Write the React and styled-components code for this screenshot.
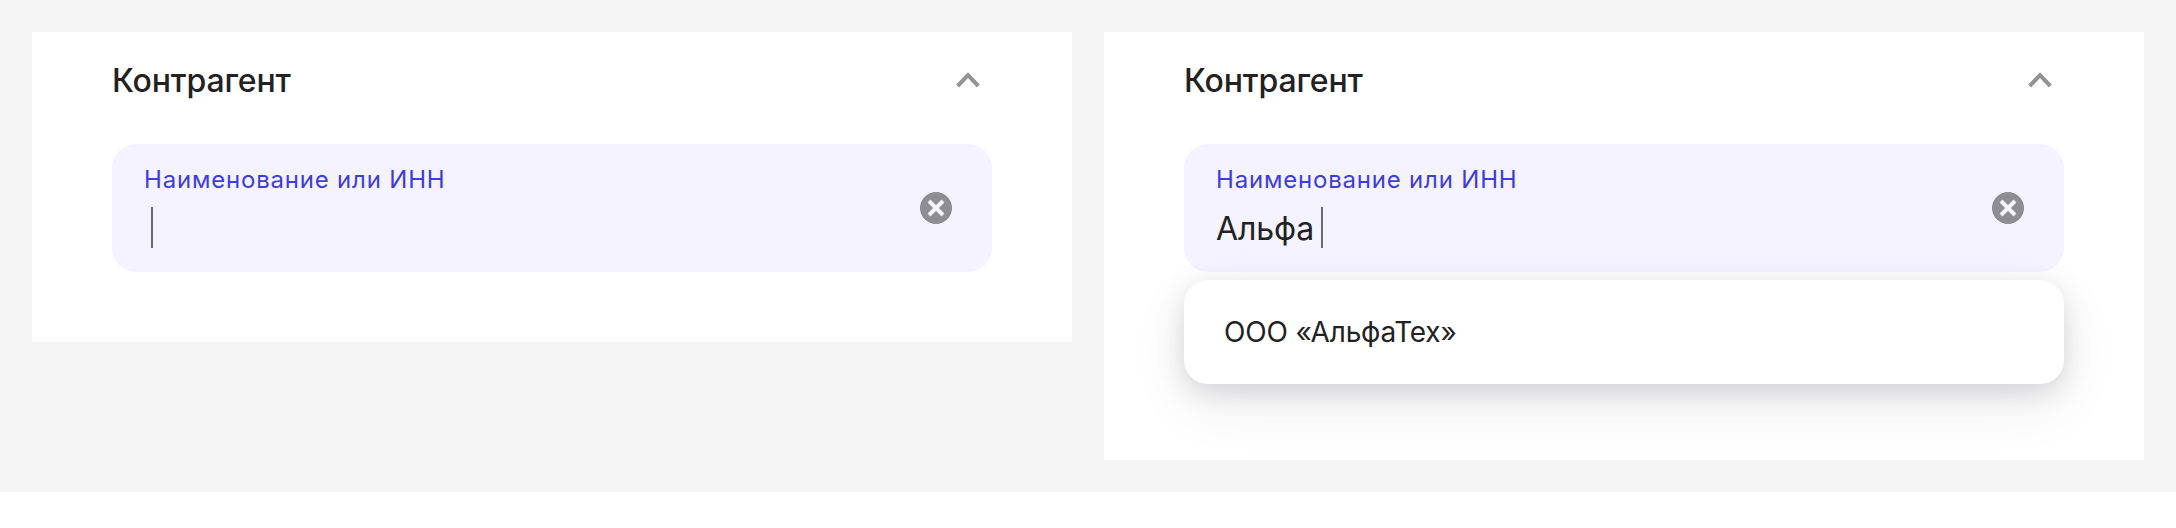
import React from 'react';
import styled, { createGlobalStyle } from 'styled-components';

const Global = createGlobalStyle`
  * { box-sizing: border-box; }
  body { margin: 0; background: #fff; font-family: Inter, sans-serif; color: #222; }
`;
const Board = styled.main`
  display: flex; align-items: flex-start; gap: 32px;
  width: 2176px; height: 492px; padding: 32px; background: #f5f5f5;
`;
const Panel = styled.section`
  width: 1040px; height: ${p => p.$height}px; padding: 0 80px; background: #fff;
`;
const Header = styled.header`
  display: flex; align-items: center; justify-content: space-between;
  height: 96px; padding-right: 12px; margin-bottom: 16px;
`;
const Title = styled.h2`
  margin: 0; padding-top: 2px; font-size: 32px; line-height: 40px; font-weight: 500; letter-spacing: -0.16px;
`;
const Field = styled.div`
  display: flex; align-items: center; justify-content: space-between;
  width: 880px; height: 128px; padding: 0 40px 0 32px; border-radius: 24px; background: #f4f3ff;
`;
const FieldText = styled.div`
  display: flex; flex-direction: column; height: 128px; padding-top: 20px;
`;
const Label = styled.label`
  font-size: 24px; line-height: 32px; letter-spacing: 0.8px; color: #403dd6;
`;
const Value = styled.div`
  display: flex; align-items: flex-start; gap: 7px; height: 41px; margin-top: 11px;
  font-size: 32px; line-height: 44px; letter-spacing: -0.1px;
`;
const Caret = styled.span`
  width: 2px; height: 41px; background: #69686e;
`;
const Menu = styled.div`
  margin-top: 8px; width: 880px; height: 104px; padding: 0 40px;
  display: flex; align-items: center; border-radius: 24px; background: #fff;
  box-shadow: 0 20px 60px rgba(11, 11, 30, .07), 0 8px 28px rgba(11, 11, 30, .13);
`;
const Option = styled.div`font-size: 28px; line-height: 36px; letter-spacing: -0.18px;`;

const Chevron = () => (
  <svg width="24" height="16" viewBox="0 0 24 16" fill="none" stroke="#949494" strokeWidth="4">
    <path d="M1.6 14 12 3.1 22.4 14" />
  </svg>
);
const Clear = () => (
  <svg width="32" height="32" viewBox="0 0 32 32">
    <circle cx="16" cy="16" r="16" fill="#8e8d93" />
    <path d="M9 9l14 14M23 9L9 23" stroke="#f4f3ff" strokeWidth="4" />
  </svg>
);
const Counterparty = ({ height, value, option }) => (
  <Panel $height={height}>
    <Header><Title>Контрагент</Title><Chevron /></Header>
    <Field>
      <FieldText>
        <Label>Наименование или ИНН</Label>
        <Value><span>{value}</span><Caret /></Value>
      </FieldText>
      <Clear />
    </Field>
    {option && <Menu><Option>{option}</Option></Menu>}
  </Panel>
);

export default function App() {
  return (
    <>
      <Global />
      <Board>
        <Counterparty height={310} value="" />
        <Counterparty height={428} value="Альфа" option="ООО «АльфаТех»" />
      </Board>
    </>
  );
}
